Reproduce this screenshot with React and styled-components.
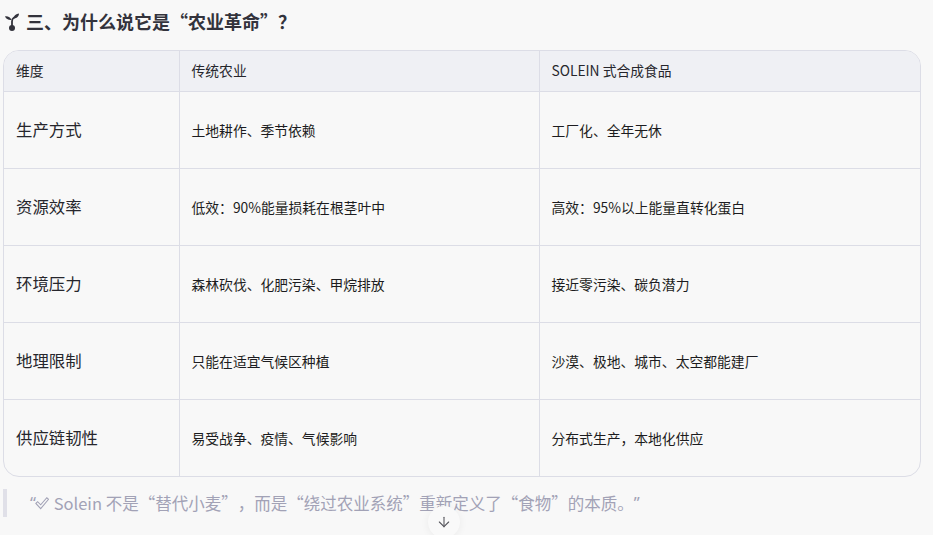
import React from "react";
import styled, { createGlobalStyle } from "styled-components";
import { ArrowDown } from "lucide-react";

const Global = createGlobalStyle`
  html, body { margin: 0; padding: 0; background: #f8f8f8; overflow: hidden; }
  body {
    font-family: "Noto Sans CJK SC", "Noto Sans", sans-serif;
    text-spacing-trim: space-all;
  }
`;

const Page = styled.main`
  position: relative;
  width: 933px;
  height: 535px;
  overflow: hidden;
  box-sizing: border-box;
  padding: 9px 12px 0 3px;
  color: #1f1f1f;
`;

const Heading = styled.h3`
  display: flex;
  align-items: flex-start;
  gap: 7px;
  margin: 0 0 17px 2px;
  height: 24px;
  font-size: 18px;
  line-height: 24px;
  font-weight: 700;
  color: #33333c;
`;

const SeedlingIcon = styled.svg`
  width: 14px;
  height: 18px;
  margin-top: 4px;
  flex: none;
`;

const TableWrap = styled.div`
  border: 1px solid #dcdde6;
  border-radius: 16px;
  overflow: hidden;
  width: 918px;
  box-sizing: border-box;
`;

const Table = styled.table`
  width: 100%;
  height: 425px;
  border-collapse: collapse;
  table-layout: fixed;
`;

const HeadCell = styled.th`
  height: 40px;
  padding: 0 12px 1px;
  box-sizing: border-box;
  background: #eff0f4;
  border-bottom: 1px solid #dcdde6;
  border-right: 1px solid #dcdde6;
  text-align: left;
  font-size: 13.8px;
  font-weight: 400;
  color: #26262c;
  &:last-child { border-right: 0; }
`;

const Cell = styled.td`
  height: 77px;
  box-sizing: border-box;
  padding: 0 12px ${(p) => (p.$lead ? "1px" : "0")};
  border-bottom: 1px solid #dcdde6;
  border-right: 1px solid #dcdde6;
  font-size: ${(p) => (p.$lead ? "16.4px" : "13.8px")};
  color: ${(p) => (p.$lead ? "#26262c" : "#1c1c20")};
  &:last-child { border-right: 0; }
  tr:last-child > & { border-bottom: 0; }
`;

const Quote = styled.blockquote`
  margin: 12px 0 0;
  height: 28px;
  border-left: 4px solid #e0e0e8;
  padding-left: 23px;
  display: flex;
  align-items: center;
  font-size: 16.5px;
  line-height: 28px;
  color: #a2a2b6;
  white-space: pre;
`;

const NarrowQuote = styled.span`
  font-family: "Noto Sans", sans-serif;
  width: 5px;
  flex: none;
`;

const Check = styled.svg`
  width: 14px;
  height: 14px;
  margin-right: 1px;
  flex: none;
`;

const ScrollButton = styled.button`
  position: absolute;
  left: 428px;
  top: 506px;
  width: 32px;
  height: 32px;
  border: 0;
  border-radius: 50%;
  padding: 0;
  background: #f9f9f9;
  box-shadow: 0 1px 8px rgba(0, 0, 0, 0.06);
  display: flex;
  align-items: center;
  justify-content: center;
  color: #55555c;
`;

const rows = [
  ["生产方式", "土地耕作、季节依赖", "工厂化、全年无休"],
  ["资源效率", "低效：90%能量损耗在根茎叶中", "高效：95%以上能量直转化蛋白"],
  ["环境压力", "森林砍伐、化肥污染、甲烷排放", "接近零污染、碳负潜力"],
  ["地理限制", "只能在适宜气候区种植", "沙漠、极地、城市、太空都能建厂"],
  ["供应链韧性", "易受战争、疫情、气候影响", "分布式生产，本地化供应"],
];

const Seedling = () => (
  <SeedlingIcon viewBox="0 0 14 18" fill="#33333c" aria-hidden="true">
    <ellipse cx="7" cy="15" rx="3" ry="3" />
    <path d="M7 14V8.5C7 6.5 7.8 5.2 9 4.5" fill="none" stroke="#33333c" strokeWidth="1.8" />
    <path d="M8 5.6C9 2.4 11 .8 14 .6 14 3.4 11.4 6 8 5.6z" />
    <path d="M6.6 7C3.6 7.4 1 6 0 3.2c3-.4 5.6 1 6.6 3.8z" />
  </SeedlingIcon>
);

export default function App() {
  return (
    <Page lang="zh-CN">
      <Global />
      <Heading>
        <Seedling />
        三、为什么说它是“农业革命”？
      </Heading>
      <TableWrap>
        <Table>
          <colgroup>
            <col style={{ width: 175 }} />
            <col style={{ width: 360 }} />
            <col />
          </colgroup>
          <thead>
            <tr>
              <HeadCell>维度</HeadCell>
              <HeadCell>传统农业</HeadCell>
              <HeadCell>SOLEIN 式合成食品</HeadCell>
            </tr>
          </thead>
          <tbody>
            {rows.map((r) => (
              <tr key={r[0]}>
                <Cell $lead>{r[0]}</Cell>
                <Cell>{r[1]}</Cell>
                <Cell>{r[2]}</Cell>
              </tr>
            ))}
          </tbody>
        </Table>
      </TableWrap>
      <Quote>
        <NarrowQuote>“</NarrowQuote>
        <Check viewBox="0 0 16 16" fill="none" stroke="#a2a2b6" strokeWidth="1.2" aria-hidden="true">
          <path d="M1 8.5 3 6.5 6.5 10 13.5 2 15.5 3.8 6.5 14.5z" />
        </Check>
        {" Solein 不是“替代小麦”，而是“绕过农业系统”重新定义了“食物”的本质。"}
        <NarrowQuote>”</NarrowQuote>
      </Quote>
      <ScrollButton aria-label="向下滚动">
        <ArrowDown size={16} strokeWidth={1.6} />
      </ScrollButton>
    </Page>
  );
}
